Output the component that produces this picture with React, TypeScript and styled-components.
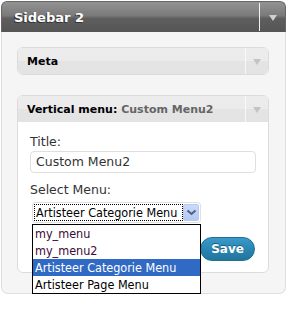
import React from "react";
import styled, { createGlobalStyle } from "styled-components";

const GlobalStyle = createGlobalStyle`
  body {
    margin: 0;
    background: #fff;
    font-family: "DejaVu Sans", Verdana, sans-serif;
  }
`;

const menus = ["my_menu", "my_menu2", "Artisteer Categorie Menu", "Artisteer Page Menu"];

const App: React.FC = () => {
  return (
    <React.Fragment>
      <GlobalStyle />
      <Widget>
        <Header>
          <HeaderTitle>Sidebar 2</HeaderTitle>
          <HeaderToggle>
            <Arrow color="#d0d0d0" />
          </HeaderToggle>
        </Header>
        <Body>
          <Box>
            <BoxTop>
              <BoxTitle>Meta</BoxTitle>
              <BoxToggle>
                <Arrow color="#c4c4c4" />
              </BoxToggle>
            </BoxTop>
          </Box>
          <Box>
            <BoxTop flat>
              <BoxTitle>
                Vertical menu<span>:</span> <Sub>Custom Menu2</Sub>
              </BoxTitle>
              <BoxToggle>
                <Arrow color="#c4c4c4" />
              </BoxToggle>
            </BoxTop>
            <BoxContent>
              <Label>Title:</Label>
              <Input>Custom Menu2</Input>
              <Label>Select Menu:</Label>
              <SelectWrap>
                <Select>
                  <SelectValue>Artisteer Categorie Menu</SelectValue>
                  <SelectButton>
                    <svg width="11" height="7" viewBox="0 0 11 7">
                      <path d="M1.5 1.5 L5.5 5 L9.5 1.5" fill="none" stroke="#4d6185" strokeWidth="2" />
                    </svg>
                  </SelectButton>
                </Select>
                <Options>
                  {menus.map((m, i) => (
                    <Option key={m} active={i === 2} dark={i > 1}>
                      {m}
                    </Option>
                  ))}
                </Options>
              </SelectWrap>
              <Actions>
                <SaveButton type="button">Save</SaveButton>
              </Actions>
            </BoxContent>
          </Box>
        </Body>
      </Widget>
    </React.Fragment>
  );
};

const Arrow = styled.span<{ color: string }>`
  display: block;
  width: 0;
  height: 0;
  border-left: 4px solid transparent;
  border-right: 4px solid transparent;
  border-top: 6px solid ${(p) => p.color};
`;

const Widget = styled.div`
  margin: 1px 0 0 1px;
  width: 285px;
`;

const Header = styled.div`
  display: flex;
  align-items: stretch;
  height: 31px;
  border-radius: 6px 6px 0 0;
  background: linear-gradient(#939393, #7a7a7a 45%, #5e5e5e 55%, #555);
  border: 1px solid #666;
  border-bottom: none;
  box-sizing: border-box;
`;

const HeaderTitle = styled.div`
  flex: 1;
  padding: 8px 0 0 12px;
  color: #fff;
  font-size: 13px;
  font-weight: bold;
  text-shadow: -1px 1px 0 #333;
`;

const HeaderToggle = styled.div`
  width: 25px;
  display: flex;
  align-items: center;
  justify-content: center;
  border-left: 1px solid #f2f2f2;
  margin: 1px 0;
  padding-top: 2px;
`;

const Body = styled.div`
  background: #f5f5f5;
  border: 1px solid #dedede;
  border-top: none;
  border-radius: 0 0 7px 7px;
  padding: 15px 16px 20px 15px;
  display: flex;
  flex-direction: column;
  gap: 20px;
`;

const Box = styled.div`
  border: 1px solid #dcdcdc;
  border-radius: 6px;
  background: #fff;
  overflow: visible;
`;

const BoxTop = styled.div<{ flat?: boolean }>`
  display: flex;
  height: 26px;
  border-radius: ${(p) => (p.flat ? "5px 5px 0 0" : "5px")};
  background: linear-gradient(#ececec, #ebebeb 50%, #e4e4e4 50%, #e3e3e3);
`;

const BoxTitle = styled.div`
  flex: 1;
  padding: 7px 0 0 9px;
  font-size: 11px;
  font-weight: bold;
  color: #000;
  white-space: nowrap;
`;

const Sub = styled.span`
  color: #666;
  font-size: 11px;
`;

const BoxToggle = styled.div`
  width: 22px;
  display: flex;
  align-items: center;
  justify-content: center;
  border-left: 1px solid #f8f8f8;
  padding-top: 2px;
`;

const BoxContent = styled.div`
  padding: 11px 12px 11px 12px;
`;

const Label = styled.div`
  font-size: 12.5px;
  line-height: 17px;
  color: #333;
  margin-top: 8px;
  &:first-child {
    margin-top: 0;
  }
`;

const Input = styled.div`
  height: 22px;
  box-sizing: border-box;
  border: 1px solid #dfdfdf;
  border-radius: 4px;
  padding: 2px 5px;
  font-size: 12.5px;
  line-height: 16px;
  color: #333;
  margin-top: 1px;
`;

const SelectWrap = styled.div`
  position: relative;
  margin: 4px 0 0 2px;
  width: 169px;
`;

const Select = styled.div`
  display: flex;
  height: 21px;
  box-sizing: border-box;
  border: 1px solid #e0e0e0;
  border-radius: 3px;
  padding: 1px;
`;

const SelectValue = styled.div`
  flex: 1;
  border: 1px dotted #000;
  font-family: "DejaVu Sans Condensed", "DejaVu Sans", sans-serif;
  font-size: 12.5px;
  line-height: 15px;
  color: #000;
  padding-left: 1px;
  overflow: hidden;
  white-space: nowrap;
`;

const SelectButton = styled.div`
  width: 16px;
  display: flex;
  align-items: center;
  justify-content: center;
  background: linear-gradient(#cbdaf9, #b4c8f4);
  border: 1px solid #b8c9ee;
  border-radius: 2px;
  box-sizing: border-box;
`;

const Options = styled.div`
  position: absolute;
  top: 22px;
  left: 0;
  width: 169px;
  box-sizing: border-box;
  border: 1px solid #000;
  background: #fff;
  z-index: 2;
`;

const Option = styled.div<{ active?: boolean; dark?: boolean }>`
  height: 17px;
  line-height: 17px;
  padding-left: 2px;
  font-family: "DejaVu Sans Condensed", "DejaVu Sans", sans-serif;
  font-size: 12.5px;
  white-space: nowrap;
  background: ${(p) => (p.active ? "#316ac5" : "#fff")};
  color: ${(p) => (p.active ? "#fff" : p.dark ? "#000" : "#3a0a36")};
`;

const Actions = styled.div`
  display: flex;
  justify-content: flex-end;
  margin-top: 14px;
  padding-right: 1px;
`;

const SaveButton = styled.button`
  width: 55px;
  height: 24px;
  border-radius: 12px;
  border: 1px solid #1f6e94;
  background: linear-gradient(#3a9acb, #2a86b4 50%, #21759b);
  color: #fff;
  font-family: "DejaVu Sans", Verdana, sans-serif;
  font-size: 12px;
  font-weight: bold;
  text-shadow: 0 -1px 0 #1c5c7c;
  padding: 0;
`;

export default App;
